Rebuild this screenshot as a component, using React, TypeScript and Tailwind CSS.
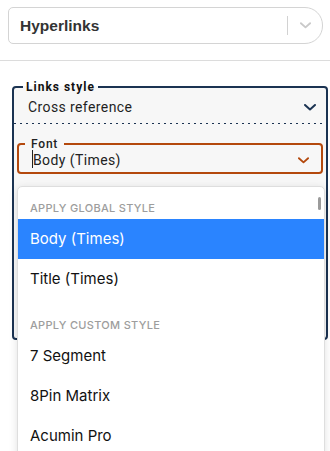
import { useState } from "react";

const GLOBAL_STYLES = ["Body (Times)", "Title (Times)"];
const CUSTOM_STYLES = ["7 Segment", "8Pin Matrix", "Acumin Pro"];

function Chevron({ className, stroke }: { className?: string; stroke: string }) {
  return (
    <svg viewBox="0 0 12 7" className={className} fill="none">
      <path d="M1 1l5 4.5L11 1" stroke={stroke} strokeWidth="2" strokeLinecap="round" strokeLinejoin="round" />
    </svg>
  );
}

export default function App() {
  const [selected, setSelected] = useState("Body (Times)");

  return (
    <div className="relative w-[330px] h-[451px] overflow-hidden bg-white font-['Roboto',sans-serif]">
      {/* section picker */}
      <div className="mt-[7px] ml-2 w-[315px] h-[37px] flex items-center border border-[#d4d4d4] rounded-l-[5px] rounded-r-[18px] bg-white">
        <span className="flex-1 pl-[11px] pt-px font-['Liberation_Sans',sans-serif] font-bold text-[15.5px] text-[#333]">
          Hyperlinks
        </span>
        <span className="w-px h-[19px] bg-[#d2d2d2]" />
        <span className="w-[34px] flex justify-center">
          <Chevron className="w-[11px] h-[7px]" stroke="#c9c9c9" />
        </span>
      </div>

      <div className="mt-[16px] border-t border-[#dcdcdc]" />

      {/* links style panel */}
      <fieldset className="mt-[18px] ml-[12px] mr-[2px] h-[261px] border-2 border-[#1b3352] rounded-[4px] bg-[#f7f7f7]">
        <legend className="ml-[9px] px-[3px] text-[12px] leading-[16px] font-bold tracking-[1px] text-[#111]">
          Links style
        </legend>
        <div className="flex items-center justify-between h-5 mt-[2px] pl-[14px] pr-[10px]">
          <span className="text-[14px] tracking-[0.4px] text-[#1f1f1f]">Cross reference</span>
          <Chevron className="w-[12px] h-[7px]" stroke="#1b3352" />
        </div>
        <div className="mt-[6px] h-px bg-[linear-gradient(to_right,#1b3352_2px,transparent_2px)] bg-[length:6px_1px]" />

        <fieldset className="mt-[13px] mx-[3px] h-[37px] border-2 border-[#b4490d] rounded-[4px] bg-[#f7f7f7]">
          <legend className="ml-[6px] px-[6px] text-[12px] leading-[14px] font-medium tracking-[0.8px] text-[#222]">
            Font
          </legend>
          <div className="flex items-center justify-between h-[18px] pl-[14px] pr-[12px]">
            <span className="relative text-[14px] tracking-[0.4px] text-[#222]">
              <span className="absolute -left-px top-0 w-px h-[18px] bg-[#222]" />
              {selected}
            </span>
            <Chevron className="w-[11px] h-[7px]" stroke="#b4490d" />
          </div>
        </fieldset>
      </fieldset>

      {/* open font menu */}
      <div className="absolute left-[17px] top-[186px] w-[308px] h-[280px] bg-white border border-[#dedede] rounded-t-[5px] shadow-[0_2px_8px_rgba(0,0,0,0.12)] font-['Inter',sans-serif]">
        <span className="absolute right-[3px] top-[10px] w-[3px] h-[13px] rounded-full bg-[#9b9b9b]" />
        <div className="pt-[14px] pb-[4px] pl-[12px] text-[11px] leading-[14px] font-medium tracking-[0.3px] text-[#9d9d9d]">
          APPLY GLOBAL STYLE
        </div>
        {GLOBAL_STYLES.map((s) => (
          <button
            key={s}
            onClick={() => setSelected(s)}
            className={`block w-full h-10 pl-[12px] text-left text-[15px] ${
              selected === s ? "bg-[#2a84ff] text-white" : "text-[#111]"
            }`}
          >
            {s}
          </button>
        ))}
        <div className="pt-[19px] pb-[4px] pl-[12px] text-[11px] leading-[14px] font-medium tracking-[0.3px] text-[#9d9d9d]">
          APPLY CUSTOM STYLE
        </div>
        {CUSTOM_STYLES.map((s) => (
          <button
            key={s}
            onClick={() => setSelected(s)}
            className={`block w-full h-10 pl-[12px] text-left text-[15px] ${
              selected === s ? "bg-[#2a84ff] text-white" : "text-[#111]"
            }`}
          >
            {s}
          </button>
        ))}
      </div>
    </div>
  );
}
